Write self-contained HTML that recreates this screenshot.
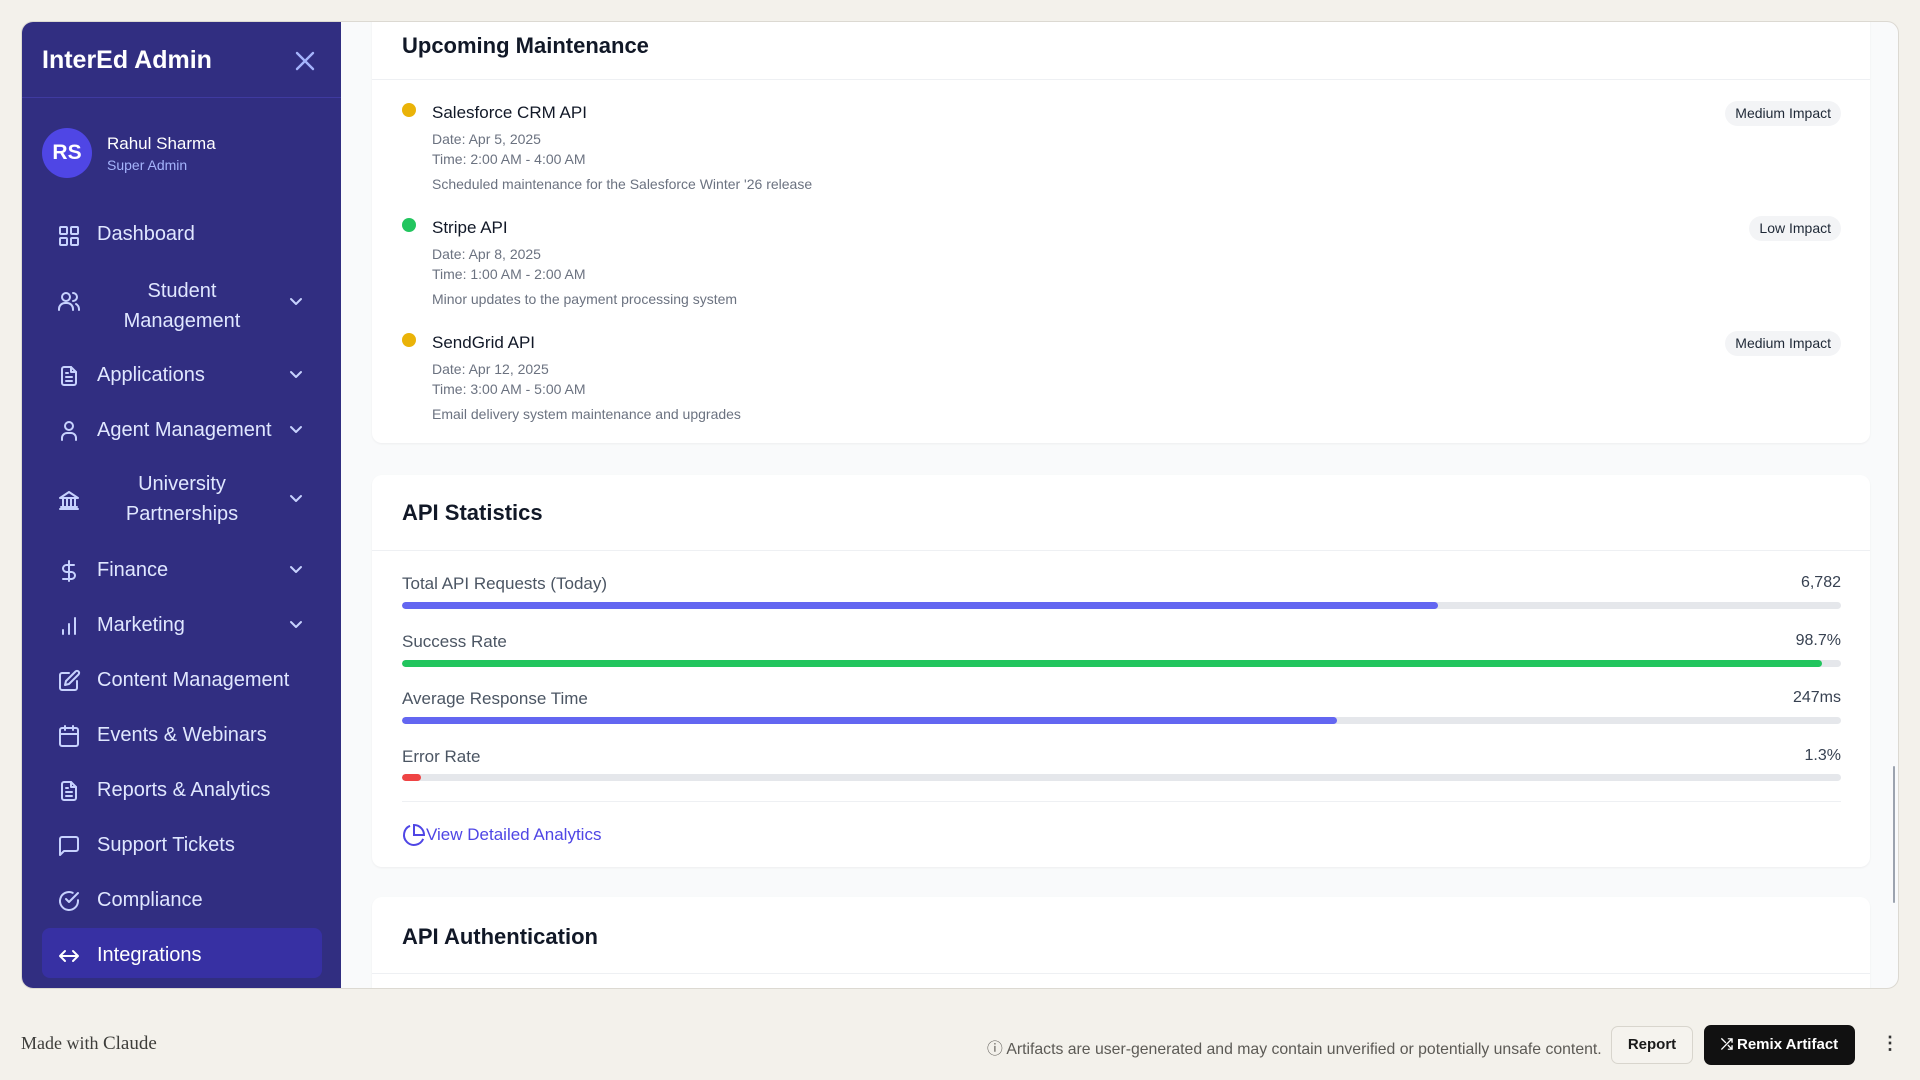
<!DOCTYPE html>
<html><head><meta charset="utf-8"><style>
*{box-sizing:border-box;margin:0;padding:0}
body{width:1920px;height:1080px;overflow:hidden;background:#f3f1eb;font-family:"Liberation Sans",sans-serif;position:relative}
.frame{position:absolute;left:21px;top:21px;width:1878px;height:968px;border-radius:12px;overflow:hidden;background:#f9fafb;border:1px solid #dcd9d2}
.side{position:absolute;left:0;top:0;width:319px;height:968px;background:#312e81;color:#e0e7ff}
.abs{position:absolute}
.nav{position:absolute;left:0;width:319px;font-size:20px;color:#e0e7ff}
.nav svg{position:absolute;left:35px;width:24px;height:24px;fill:none;stroke:#c7d2fe;stroke-width:2;stroke-linecap:round;stroke-linejoin:round}
.nav .t{position:absolute;left:75px;white-space:nowrap}
.nav svg.chev{left:266px;width:16px;height:16px;stroke-width:2}
.card{position:absolute;left:350px;width:1498px;background:#fff;border-radius:10px;box-shadow:0 1px 2px rgba(0,0,0,.05)}
.h{position:absolute;left:30px;font-size:22px;font-weight:bold;color:#111827}
.div{position:absolute;left:0;right:0;height:1px;background:#eef0f3}
.dot{position:absolute;left:30px;width:14px;height:14px;border-radius:50%}
.it{position:absolute;left:60px;color:#111827;font-size:17px}
.sm{position:absolute;left:60px;color:#6b7280;font-size:14px}
.badge{position:absolute;right:29px;height:25px;line-height:25px;padding:0 10px;background:#f3f4f6;border-radius:13px;font-size:14px;color:#1f2937}
.lbl{position:absolute;left:30px;font-size:17px;color:#4b5563}
.val{position:absolute;right:29px;font-size:16px;color:#374151}
.bar{position:absolute;left:30px;right:29px;height:7px;background:#e5e7eb;border-radius:4px;overflow:hidden}
.bar i{display:block;height:100%;border-radius:4px}
</style></head><body>
<div class="frame">
 <div class="side">
  <div class="abs" style="left:20px;top:24px;font-size:25px;font-weight:bold;color:#fff">InterEd Admin</div>
  <svg class="abs" style="left:272px;top:28px" width="22" height="22" viewBox="0 0 22 22" fill="none" stroke="#a5b4fc" stroke-width="2.4" stroke-linecap="round"><path d="M3 3L19 19M19 3L3 19"/></svg>
  <div class="abs" style="left:0;top:75px;width:319px;height:1px;background:#3f3aa0"></div>
  <div class="abs" style="left:20px;top:106px;width:50px;height:50px;border-radius:50%;background:#4f46e5;color:#fff;font-weight:bold;font-size:21px;line-height:50px;text-align:center">RS</div>
  <div class="abs" style="left:85px;top:112px;font-size:17px;color:#fff">Rahul Sharma</div>
  <div class="abs" style="left:85px;top:135px;font-size:14px;color:#a5b4fc">Super Admin</div>

  <div class="nav" style="top:192px"><svg viewBox="0 0 24 24" style="top:10px"><rect x="3" y="3" width="7" height="7" rx="1"/><rect x="14" y="3" width="7" height="7" rx="1"/><rect x="3" y="14" width="7" height="7" rx="1"/><rect x="14" y="14" width="7" height="7" rx="1"/></svg><span class="t" style="top:9px">Dashboard</span></div>

  <div class="nav" style="top:254px"><svg viewBox="0 0 24 24" style="top:13px"><circle cx="9" cy="8" r="4"/><path d="M2 21v-1a6 6 0 0 1 6-6h2a6 6 0 0 1 6 6v1"/><path d="M16 4a4 4 0 0 1 0 8M22 21v-1a6 6 0 0 0-3-5"/></svg><span class="t" style="left:75px;width:170px;text-align:center;top:0;line-height:30px;white-space:normal">Student Management</span><svg class="chev" viewBox="0 0 16 16" style="top:17px"><path d="M3 6l5 5 5-5"/></svg></div>

  <div class="nav" style="top:332px"><svg viewBox="0 0 24 24" style="top:10px"><path d="M14 3H7a2 2 0 0 0-2 2v14a2 2 0 0 0 2 2h10a2 2 0 0 0 2-2V8z"/><path d="M14 3v5h5M9 13h6M9 17h6M9 9h2"/></svg><span class="t" style="top:10px">Applications</span><svg class="chev" viewBox="0 0 16 16" style="top:12px"><path d="M3 6l5 5 5-5"/></svg></div>

  <div class="nav" style="top:387px"><svg viewBox="0 0 24 24" style="top:10px"><circle cx="12" cy="7" r="4"/><path d="M5 21v-2a5 5 0 0 1 5-5h4a5 5 0 0 1 5 5v2"/></svg><span class="t" style="top:10px">Agent Management</span><svg class="chev" viewBox="0 0 16 16" style="top:12px"><path d="M3 6l5 5 5-5"/></svg></div>

  <div class="nav" style="top:447px"><svg viewBox="0 0 24 24" style="top:19px"><path d="M3 10l9-6 9 6M4 10h16M3 21h18M6 10v9M10 10v9M14 10v9M18 10v9M4 19h16"/></svg><span class="t" style="left:75px;width:170px;text-align:center;top:0;line-height:30px;white-space:normal">University Partnerships</span><svg class="chev" viewBox="0 0 16 16" style="top:21px"><path d="M3 6l5 5 5-5"/></svg></div>

  <div class="nav" style="top:527px"><svg viewBox="0 0 24 24" style="top:10px"><path d="M12 2v20M17 6H9.5a3.5 3.5 0 0 0 0 7h5a3.5 3.5 0 0 1 0 7H6"/></svg><span class="t" style="top:10px">Finance</span><svg class="chev" viewBox="0 0 16 16" style="top:12px"><path d="M3 6l5 5 5-5"/></svg></div>

  <div class="nav" style="top:582px"><svg viewBox="0 0 24 24" style="top:10px"><path d="M6 20v-4M12 20V10M18 20V4"/></svg><span class="t" style="top:10px">Marketing</span><svg class="chev" viewBox="0 0 16 16" style="top:12px"><path d="M3 6l5 5 5-5"/></svg></div>

  <div class="nav" style="top:637px"><svg viewBox="0 0 24 24" style="top:10px"><path d="M12 4H5a2 2 0 0 0-2 2v13a2 2 0 0 0 2 2h13a2 2 0 0 0 2-2v-7"/><path d="M18.5 2.5a2.1 2.1 0 0 1 3 3L12 15l-4 1 1-4z"/></svg><span class="t" style="top:10px">Content Management</span></div>

  <div class="nav" style="top:692px"><svg viewBox="0 0 24 24" style="top:10px"><rect x="3" y="4" width="18" height="18" rx="2"/><path d="M16 2v4M8 2v4M3 10h18"/></svg><span class="t" style="top:10px">Events &amp; Webinars</span></div>

  <div class="nav" style="top:747px"><svg viewBox="0 0 24 24" style="top:10px"><path d="M14 3H7a2 2 0 0 0-2 2v14a2 2 0 0 0 2 2h10a2 2 0 0 0 2-2V8z"/><path d="M14 3v5h5M9 13h6M9 17h6M9 9h2"/></svg><span class="t" style="top:10px">Reports &amp; Analytics</span></div>

  <div class="nav" style="top:802px"><svg viewBox="0 0 24 24" style="top:10px"><path d="M21 15a2 2 0 0 1-2 2H7l-4 4V5a2 2 0 0 1 2-2h14a2 2 0 0 1 2 2z"/></svg><span class="t" style="top:10px">Support Tickets</span></div>

  <div class="nav" style="top:857px"><svg viewBox="0 0 24 24" style="top:10px"><path d="M21 11.1V12a9 9 0 1 1-5.3-8.2"/><path d="M21 4L12 13l-3-3"/></svg><span class="t" style="top:10px">Compliance</span></div>

  <div class="abs" style="left:20px;top:906px;width:280px;height:50px;border-radius:8px;background:#3730a3"></div>
  <div class="nav" style="top:912px;color:#fff"><svg viewBox="0 0 24 24" style="top:10px;stroke:#fff"><path d="M8 7l-5 5 5 5M16 7l5 5-5 5M3 12h18"/></svg><span class="t" style="top:10px">Integrations</span></div>
 </div>

 <!-- card 1 -->
 <div class="card" style="top:-30px;height:451px">
  <div class="h" style="top:41px">Upcoming Maintenance</div>
  <div class="div" style="top:87px"></div>
  <div class="dot" style="top:111px;background:#eab308"></div>
  <div class="it" style="top:111px">Salesforce CRM API</div>
  <div class="badge" style="top:109px">Medium Impact</div>
  <div class="sm" style="top:139px">Date: Apr 5, 2025</div>
  <div class="sm" style="top:159px">Time: 2:00 AM - 4:00 AM</div>
  <div class="sm" style="top:184px">Scheduled maintenance for the Salesforce Winter '26 release</div>
  <div class="dot" style="top:226px;background:#22c55e"></div>
  <div class="it" style="top:226px">Stripe API</div>
  <div class="badge" style="top:224px">Low Impact</div>
  <div class="sm" style="top:254px">Date: Apr 8, 2025</div>
  <div class="sm" style="top:274px">Time: 1:00 AM - 2:00 AM</div>
  <div class="sm" style="top:299px">Minor updates to the payment processing system</div>
  <div class="dot" style="top:341px;background:#eab308"></div>
  <div class="it" style="top:341px">SendGrid API</div>
  <div class="badge" style="top:339px">Medium Impact</div>
  <div class="sm" style="top:369px">Date: Apr 12, 2025</div>
  <div class="sm" style="top:389px">Time: 3:00 AM - 5:00 AM</div>
  <div class="sm" style="top:414px">Email delivery system maintenance and upgrades</div>
 </div>

 <!-- card 2 -->
 <div class="card" style="top:453px;height:392px">
  <div class="h" style="top:25px">API Statistics</div>
  <div class="div" style="top:75px"></div>
  <div class="lbl" style="top:99px">Total API Requests (Today)</div><div class="val" style="top:99px">6,782</div>
  <div class="bar" style="top:127px"><i style="width:72%;background:#6366f1"></i></div>
  <div class="lbl" style="top:157px">Success Rate</div><div class="val" style="top:157px">98.7%</div>
  <div class="bar" style="top:185px"><i style="width:98.7%;background:#22c55e"></i></div>
  <div class="lbl" style="top:214px">Average Response Time</div><div class="val" style="top:214px">247ms</div>
  <div class="bar" style="top:242px"><i style="width:65%;background:#6366f1"></i></div>
  <div class="lbl" style="top:272px">Error Rate</div><div class="val" style="top:272px">1.3%</div>
  <div class="bar" style="top:299px"><i style="width:1.3%;background:#ef4444"></i></div>
  <div class="div" style="top:326px;left:30px;right:29px"></div>
  <svg class="abs" style="left:30px;top:348px" width="24" height="24" viewBox="0 0 24 24" fill="none" stroke="#4f46e5" stroke-width="2"><path d="M21.2 15.9A10 10 0 1 1 8 2.8"/><path d="M22 12A10 10 0 0 0 12 2v10z"/></svg>
  <div class="abs" style="left:54px;top:350px;font-size:17px;color:#4f46e5">View Detailed Analytics</div>
 </div>

 <!-- card 3 -->
 <div class="card" style="top:875px;height:120px">
  <div class="h" style="top:27px">API Authentication</div>
  <div class="div" style="top:76px"></div>
 </div>
 <div class="abs" style="left:1871px;top:744px;width:2px;height:137px;background:#9ca3af;border-radius:1px"></div>
</div>

<div class="abs" style="left:21px;top:1033px;font-size:18px;color:#3d3d3a;font-family:'Liberation Serif',serif">Made with <span style="font-size:19px">Claude</span></div>
<div class="abs" style="left:987px;top:1036px;font-size:15.8px;color:#5c5a55">ⓘ Artifacts are user-generated and may contain unverified or potentially unsafe content.</div>
<div class="abs" style="left:1611px;top:1026px;width:82px;height:38px;border:1px solid #d8d5cd;border-radius:7px;background:#f5f3ee;font-size:15px;font-weight:bold;line-height:36px;text-align:center;color:#1a1a1a">Report</div>
<div class="abs" style="left:1704px;top:1025px;width:151px;height:40px;border-radius:7px;background:#111;color:#fff;font-size:15px;font-weight:bold;line-height:40px;text-align:center">⤮ Remix Artifact</div>
<div class="abs" style="left:1881px;top:1033px;font-size:18px;color:#333;font-weight:bold">⋮</div>
</body></html>
